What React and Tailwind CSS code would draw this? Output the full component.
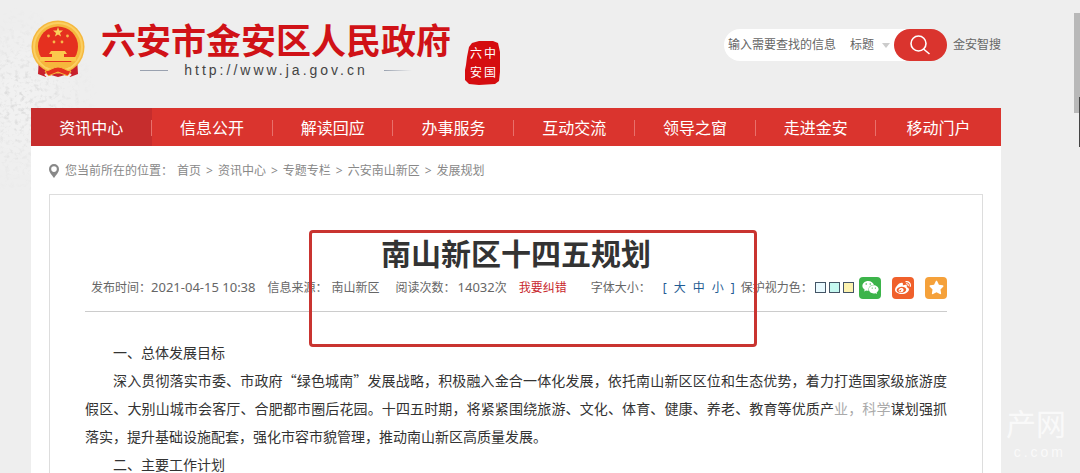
import React from 'react'
import { FaWeixin, FaWeibo, FaStar } from 'react-icons/fa'

const navItems = ['资讯中心', '信息公开', '解读回应', '办事服务', '互动交流', '领导之窗', '走进金安', '移动门户']
const crumbs = ['首页', '资讯中心', '专题专栏', '六安南山新区', '发展规划']

function Emblem() {
  return (
    <svg viewBox="0 0 54 58" className="h-[58px] w-[54px] shrink-0" aria-hidden="true">
      <path d="M8 38 L7 54 L15 57 L20 55 L27 57 L34 55 L39 57 L47 54 L46 38Z" fill="#c8202c" />
      <circle cx="27" cy="27" r="26.500" fill="#f5b83e" />
      <circle cx="27" cy="27" r="24" fill="none" stroke="#fbcf62" strokeWidth="2" />
      <circle cx="27" cy="26.500" r="20" fill="#e5301f" />
      <path d="M27 7l1.200 3.600h3.800l-3 2.300 1.100 3.700-3.100-2.200-3.100 2.200 1.100-3.700-3-2.300h3.800z" fill="#fbd25b" />
      <g fill="#f7b84a">
        <circle cx="17.500" cy="16" r="1.400" />
        <circle cx="36.500" cy="16" r="1.400" />
        <circle cx="23" cy="22" r="1.400" />
        <circle cx="31" cy="22" r="1.400" />
      </g>
      <path d="M20 31h14l2 3h-3v3h12v4H9v-4h12v-3h-3z" fill="#fbc84c" />
      <path d="M10 42h34l-5 5-6-1-6 4-6-4-6 1z" fill="#f6b63c" />
      <path d="M14 51c5 0 8-4 13-4s8 4 13 4l-3 5-10-4-10 4z" fill="#e5301f" stroke="#f6b63c" strokeWidth="1" />
      <path d="M14 54l4 4M40 54l-4 4" stroke="#f3eeee" strokeWidth="2" />
    </svg>
  )
}

function Seal() {
  return (
    <div className="relative mt-10 ml-3.5 h-[45px] w-[36px]">
      <svg viewBox="0 0 36 45" className="h-full w-full" aria-hidden="true">
        <path d="M7 3l7-2 14 0 5 2 2 9v13l0 7-1 9-4 3-16 1-10-1-4-4V30L1 25l1-8 2-10z" fill="#d50d10" />
      </svg>
      <div className="absolute inset-0 grid grid-cols-2 place-items-center p-1 font-['Noto_Sans_CJK_SC',sans-serif] text-xs leading-none text-white">
        <span>六</span>
        <span>中</span>
        <span>安</span>
        <span>国</span>
      </div>
    </div>
  )
}

// faint stone relief behind the logo
function Relief() {
  return (
    <svg viewBox="0 0 150 190" className="absolute top-0 left-0 h-[190px] w-[150px]" aria-hidden="true">
      <defs>
        <filter id="grain" x="0" y="0" width="100%" height="100%">
          <feTurbulence type="fractalNoise" baseFrequency="0.2 0.25" numOctaves="4" seed="4" />
          <feColorMatrix values="0 0 0 0 0.6  0 0 0 0 0.6  0 0 0 0 0.6  2.4 0 0 0 -1.200" />
        </filter>
        <radialGradient id="fade" cx="0.150" cy="0.540" r="0.500">
          <stop offset="0" stopColor="#fff" stopOpacity="0.800" />
          <stop offset="1" stopColor="#fff" stopOpacity="0" />
        </radialGradient>
        <mask id="reliefMask">
          <rect width="150" height="190" fill="url(#fade)" />
        </mask>
      </defs>
      <g mask="url(#reliefMask)">
        <rect width="150" height="190" fill="#fff" opacity="0.300" />
        <rect width="150" height="190" filter="url(#grain)" />
      </g>
    </svg>
  )
}

function Header() {
  return (
    <header className="flex h-[108px] items-start">
      <div className="pt-5">
        <Emblem />
      </div>
      <div className="ml-4">
        <h1 className="mt-5 text-[35px] leading-[42px] font-bold whitespace-nowrap text-[#d01217]">六安市金安区人民政府</h1>
        <div className="flex items-center justify-center gap-4">
          <i className="h-px w-7 bg-gray-400" />
          <span className="font-['Liberation_Sans',Arial,sans-serif] text-sm leading-4 tracking-[3px] text-[#444]">http://www.ja.gov.cn</span>
          <i className="h-px w-7 bg-linear-to-r from-gray-400 to-transparent" />
        </div>
      </div>
      <Seal />
      <form className="mt-[29px] ml-auto flex h-8 items-center text-xs text-[#666]">
        <div className="flex h-8 items-center rounded-l-full bg-white pr-6 pl-1">
          <input
            aria-label="搜索"
            placeholder="输入需要查找的信息"
            className="w-[122px] bg-transparent outline-none placeholder:text-[#666]"
          />
          <select aria-label="搜索范围" className="w-7 appearance-none bg-transparent outline-none">
            <option>标题</option>
          </select>
          <svg viewBox="0 0 8 5" className="mx-1 h-[5px] w-2" aria-hidden="true">
            <path d="M0 0h8L4 5z" fill="#ccc" />
          </svg>
        </div>
        <button type="button" aria-label="搜索" className="-ml-6 flex h-8 w-[53px] items-center justify-center rounded-full bg-[#da342e]">
          <svg viewBox="0 0 20 20" className="size-5" fill="none" stroke="#fff" strokeWidth="1.600" aria-hidden="true">
            <circle cx="8.500" cy="8.500" r="7.500" />
            <path d="M13.500 14l6 5" />
          </svg>
        </button>
        <a href="#" className="ml-1.5">金安智搜</a>
      </form>
    </header>
  )
}

function Breadcrumb() {
  return (
    <div className="flex h-12 items-center px-[18px] pt-0.5 text-xs text-[#888]">
      <svg viewBox="0 0 10 14" className="mr-1.5 h-[14px] w-2.5" aria-hidden="true">
        <path d="M5 0a5 5 0 0 1 5 5c0 3.500-3 6-5 9C3 11 0 8.500 0 5a5 5 0 0 1 5-5zm0 2.300a2.800 2.800 0 1 0 0 5.600 2.800 2.800 0 0 0 0-5.600z" fill="#888" fillRule="evenodd" />
      </svg>
      <span className="mr-1">您当前所在的位置：</span>
      {crumbs.map((name, i) => (
        <React.Fragment key={name}>
          {i > 0 && <span className="mx-[5px]">&gt;</span>}
          <a href="#">{name}</a>
        </React.Fragment>
      ))}
    </div>
  )
}

function ArticleMeta() {
  return (
    <div className="flex h-[49px] items-center border-b border-[#ccc] pt-px pl-1.5 text-xs whitespace-nowrap text-[#666]">
      <span>发布时间：</span>
      <span className="text-[13px]">2021-04-15 10:38</span>
      <span className="ml-3">信息来源：</span>
      <span className="ml-1">南山新区</span>
      <span className="ml-4">阅读次数：</span>
      <span className="ml-0.5 text-[13px]">14032</span>
      <span>次</span>
      <a href="#" className="ml-3 text-[#c8272d]">我要纠错</a>
      <span className="ml-6">字体大小：</span>
      <span className="ml-3 flex gap-[7px] text-[#1f5c93]">
        <span>[</span>
        <button type="button">大</button>
        <button type="button">中</button>
        <button type="button">小</button>
        <span>]</span>
      </span>
      <span className="ml-1.5">保护视力色：</span>
      <span className="ml-0.5 flex gap-[3px]">
        <button type="button" aria-label="白色" className="size-[11px] border border-[#456] bg-[#e9faff]" />
        <button type="button" aria-label="青色" className="size-[11px] border border-[#456] bg-[#c5f8f0]" />
        <button type="button" aria-label="黄色" className="size-[11px] border border-[#456] bg-[#fdf3b0]" />
      </span>
      <span className="ml-auto flex gap-[11px] text-white">
        <a href="#" aria-label="微信" className="flex size-[22px] items-center justify-center rounded bg-[#3cb44a]"><FaWeixin size={17} /></a>
        <a href="#" aria-label="微博" className="flex size-[22px] items-center justify-center rounded bg-[#f0602b]"><FaWeibo size={16} /></a>
        <a href="#" aria-label="收藏" className="flex size-[22px] items-center justify-center rounded bg-[#f5a13a]"><FaStar size={15} /></a>
      </span>
    </div>
  )
}

export default function App() {
  return (
    <div lang="zh-CN" className="relative h-screen overflow-hidden bg-[#eee] font-['Noto_Sans','Noto_Sans_CJK_SC',sans-serif]">
      <Relief />
      <div className="relative mr-[79px] ml-[31px]">
        <Header />
        <nav className="grid h-[38px] grid-cols-[repeat(7,12.45%)_1fr] bg-[#da342e] text-white">
          {navItems.map((item, i) => (
            <a key={item} href="#" className={`relative flex items-center justify-center pt-0.5 ${i === 0 ? 'bg-[#c62d2d]' : ''}`}>
              {item}
              {i < navItems.length - 1 && <i className="absolute right-0 h-4 w-px bg-[#e8706b]" />}
            </a>
          ))}
        </nav>
        <main className="bg-white">
          <Breadcrumb />
          <article className="relative mx-[18px] border border-[#ddd] px-[35px] pt-9 pb-10">
            <h2 className="text-center text-3xl leading-[46px] font-bold text-[#333]">南山新区十四五规划</h2>
            <div className="-mt-3.5">
              <ArticleMeta />
            </div>
            <div className="mt-[26px] text-justify indent-7 font-['Noto_Sans_CJK_SC',sans-serif] text-sm leading-7 text-[#333]">
              <p>一、总体发展目标</p>
              <p>
                深入贯彻落实市委、市政府“绿色城南”发展战略，积极融入金合一体化发展，依托南山新区区位和生态优势，着力打造国家级旅游度假区、大别山城市会客厅、合肥都市圈后花园。十四五时期，将紧紧围绕旅游、文化、体育、健康、养老、教育等优质产<span className="text-[#aaa]">业，科学</span>谋划强抓落实，提升基础设施配套，强化市容市貌管理，推动南山新区高质量发展。
              </p>
              <p>二、主要工作计划</p>
            </div>
            <div className="absolute top-[35px] left-[259px] h-[117px] w-[448px] rounded-sm border-3 border-[#c93430]" />
          </article>
        </main>
      </div>

      {/* watermark */}
      <div className="absolute right-[14px] bottom-[13px] text-right text-white/70">
        <div className="text-3xl leading-10">产网</div>
        <div className="font-['Liberation_Sans',Arial,sans-serif] text-sm leading-4 tracking-[3px]">c.com</div>
      </div>

      {/* scrollbar */}
      <div className="absolute top-[13px] right-0 h-[100px] w-1.5 bg-[#b8b8b8]" />
      <div className="absolute top-[97px] right-0 h-[50px] w-px bg-[#444]" />
    </div>
  )
}
